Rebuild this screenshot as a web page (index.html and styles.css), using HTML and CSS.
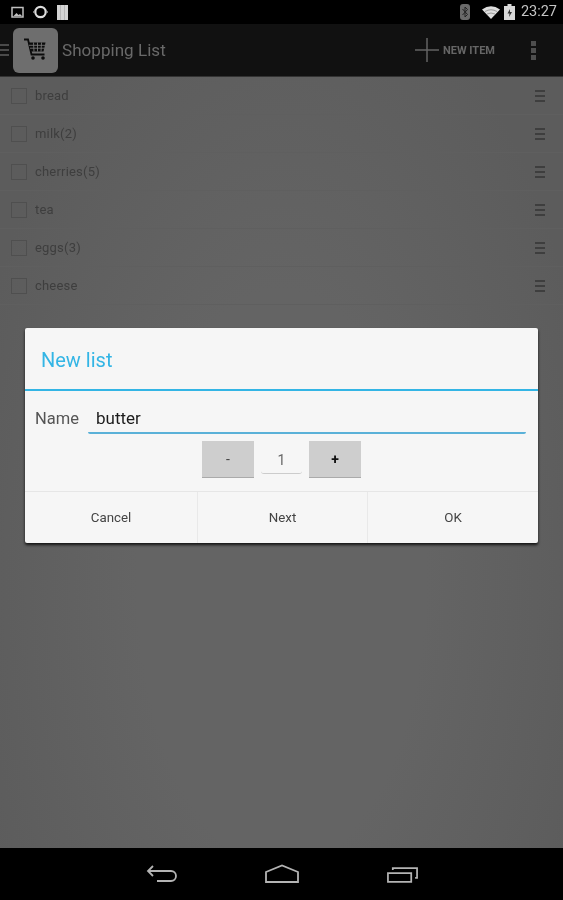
FILE: index.html
```html
<!DOCTYPE html>
<html lang="en">
<head>
<meta charset="utf-8">
<title>Shopping List</title>
<link rel="stylesheet" href="styles.css">
</head>
<body>
<div class="screen">
  <header class="status">
    <div class="status-left">
      <svg class="ico" width="13" height="13" viewBox="0 0 13 13"><path d="M1 1.500h11v9.500H1z" fill="none" stroke="#c0c0c0" stroke-width="1.500"/><path d="M2.500 10l3-3 2 2 1.500-1 2 2z" fill="#c0c0c0"/></svg>
      <svg class="ico" width="15" height="16" viewBox="0 0 15 16"><circle cx="7.500" cy="8" r="5.200" fill="none" stroke="#dcdcdc" stroke-width="2.200"/><path d="M0 8h1.500M13.500 8H15" stroke="#999" stroke-width="1.500"/></svg>
      <svg class="ico" width="11" height="15" viewBox="0 0 11 15"><path d="M0 0h11v15H0z" fill="#d4d4d4"/><path d="M3.500 0v15M7.500 0v15" stroke="#b0b0b0" stroke-width=".8"/></svg>
    </div>
    <div class="status-right">
      <svg class="bt" width="10" height="16" viewBox="0 0 10 16"><rect width="10" height="16" rx="3" fill="#6a6a6a"/><path d="M2.500 5l5 5.500L5 13V3l2.500 2.500-5 5.500" fill="none" stroke="#222" stroke-width="1"/></svg>
      <svg class="wifi" width="18" height="13" viewBox="0 0 18 13"><path d="M0 3.500Q9-3 18 3.500L9 13z" fill="#dedede"/><path d="M3 5.500Q9 2 15 5.500M5 8Q9 6 13 8" stroke="#888" stroke-width=".8" fill="none"/></svg>
      <svg class="batt" width="11" height="16" viewBox="0 0 11 16"><path d="M3.500 0h4v2h3.500v14H0V2h3.500z" fill="#d8d8d8"/><path d="M6 5L3.500 9.500h2L5 13l3-5H6z" fill="#333"/></svg>
      <span class="clock">23:27</span>
    </div>
  </header>

  <nav class="actionbar">
    <div class="drawer"><i></i><i></i><i></i></div>
    <div class="app-icon">
      <svg width="30" height="30" viewBox="0 0 30 30"><path d="M3 4.500h4l3.500 15h13" fill="none" stroke="#0c0c0c" stroke-width="1.800"/><path d="M7.500 7.500h17l-2 9H9.500z" fill="#0c0c0c"/><path d="M8 10.300h16M9 13.200h14.500M12.500 7.500l.5 9M16.500 7.500v9M20.500 7.500l-.5 9" stroke="#777" stroke-width=".9"/><circle cx="12" cy="23" r="1.800" fill="#0c0c0c"/><circle cx="22" cy="23" r="1.800" fill="#0c0c0c"/></svg>
    </div>
    <span class="app-title">Shopping List</span>
    <div class="new-item">
      <svg width="24" height="24" viewBox="0 0 24 24"><path d="M12 0v24M0 12h24" stroke="#636363" stroke-width="1.500"/></svg>
      <span>NEW ITEM</span>
    </div>
    <div class="overflow"><i></i><i></i><i></i></div>
  </nav>

  <main class="content">
    <ul class="list">
      <li class="row"><span class="check"></span><span class="label">bread</span><span class="grip"><i></i><i></i><i></i></span></li>
      <li class="row"><span class="check"></span><span class="label">milk(2)</span><span class="grip"><i></i><i></i><i></i></span></li>
      <li class="row"><span class="check"></span><span class="label">cherries(5)</span><span class="grip"><i></i><i></i><i></i></span></li>
      <li class="row"><span class="check"></span><span class="label">tea</span><span class="grip"><i></i><i></i><i></i></span></li>
      <li class="row"><span class="check"></span><span class="label">eggs(3)</span><span class="grip"><i></i><i></i><i></i></span></li>
      <li class="row"><span class="check"></span><span class="label">cheese</span><span class="grip"><i></i><i></i><i></i></span></li>
    </ul>

    <section class="dialog">
      <h2 class="dialog-title">New list</h2>
      <div class="dialog-body">
        <div class="name-row">
          <span class="name-label">Name</span>
          <span class="name-field">butter</span>
        </div>
        <div class="stepper">
          <span class="step minus">-</span>
          <span class="qty">1</span>
          <span class="step plus">+</span>
        </div>
      </div>
      <div class="dialog-actions">
        <span class="action">Cancel</span>
        <span class="action">Next</span>
        <span class="action">OK</span>
      </div>
    </section>
  </main>

  <footer class="navbar">
    <svg width="32" height="20" viewBox="0 0 32 20"><path d="M7 2L2 7l5 5M2 7h23a4.500 4.500 0 0 1 0 10H11" fill="none" stroke="#b4b4b4" stroke-width="1.800"/></svg>
    <svg width="36" height="20" viewBox="0 0 36 20"><path d="M2 8L18 1.500 34 8v10H2z" fill="none" stroke="#b4b4b4" stroke-width="1.800"/></svg>
    <svg width="33" height="20" viewBox="0 0 34 20"><path d="M2 9h24v9H2z" fill="none" stroke="#b4b4b4" stroke-width="1.800"/><path d="M7 6V4h25v10h-2" fill="none" stroke="#b4b4b4" stroke-width="1.800"/></svg>
  </footer>
</div>
</body>
</html>
```
FILE: styles.css
```css
* { box-sizing: border-box; }
html, body { margin: 0; padding: 0; background: #000; }
body { font-family: Roboto, "Noto Sans", sans-serif; }
.screen {
  width: 563px;
  height: 900px;
  display: flex;
  flex-direction: column;
  overflow: hidden;
  filter: blur(0.5px);
}

.status {
  height: 24px;
  flex: none;
  background: #000;
  display: flex;
  align-items: center;
  justify-content: space-between;
  padding: 0 6px 0 11px;
}
.status-left { display: flex; align-items: center; gap: 9px; }
.status-right { display: flex; align-items: center; }
.bt { margin-right: 12px; }
.wifi { margin-right: 4px; }
.batt { margin-right: 6px; }
.clock { color: #c4c4c4; font-size: 14.500px; line-height: 24px; }
.ico { display: block; }

.actionbar {
  height: 53px;
  flex: none;
  background: #111;
  border-bottom: 1px solid #333;
  display: flex;
  align-items: center;
  position: relative;
}
.drawer { width: 13px; display: flex; flex-direction: column; gap: 3px; }
.drawer i { display: block; height: 2px; width: 9px; background: #4a4a4a; }
.app-icon {
  width: 45px;
  height: 45px;
  border-radius: 6px;
  background: #6e6e6e;
  display: flex;
  align-items: center;
  justify-content: center;
}
.app-title { margin-left: 4px; font-size: 17px; letter-spacing: .05px; color: #696969; }
.new-item {
  margin-left: auto;
  display: flex;
  align-items: center;
  gap: 4px;
  color: #666;
  font-size: 11px;
  font-weight: 700;
}
.overflow { width: 68px; padding-left: 8px; display: flex; flex-direction: column; align-items: center; gap: 2px; }
.overflow i { display: block; width: 5px; height: 5px; background: #4e4e4e; }

.content {
  flex: 1;
  position: relative;
  background: radial-gradient(ellipse 320px 640px at 50% 65%, #646464 45%, #5c5c5c 100%);
}
.list { list-style: none; margin: 0; padding: 0; }
.row {
  height: 38px;
  display: flex;
  align-items: center;
  padding: 0 18px 0 11px;
  border-bottom: 1px solid #5f5f5f;
}
.check { width: 16px; height: 16px; border: 1px solid #4f4f4f; flex: none; }
.label { margin-left: 8px; font-size: 13px; letter-spacing: .2px; color: #3e3e3e; }
.grip { margin-left: auto; display: flex; flex-direction: column; gap: 3px; }
.grip i { display: block; width: 10px; height: 2px; background: #3e3e3e; }

.dialog {
  position: absolute;
  left: 25px;
  top: 251px;
  width: 513px;
  height: 215px;
  background: #f6f6f6;
  border-radius: 2px;
  box-shadow: 0 2px 3px rgba(0,0,0,.8);
  display: flex;
  flex-direction: column;
}
.dialog-title {
  margin: 0;
  height: 63px;
  flex: none;
  padding: 2px 16px 0;
  display: flex;
  align-items: center;
  font-size: 20px;
  font-weight: 400;
  color: #33b5e5;
  border-bottom: 2px solid #33b5e5;
}
.dialog-body { flex: 1; display: flex; flex-direction: column; }
.name-row { display: flex; align-items: flex-start; padding: 16px 12px 0 10px; height: 50px; }
.name-label { font-size: 16.500px; line-height: 24px; color: #555; width: 53px; flex: none; }
.name-field {
  flex: 1;
  height: 27px;
  padding-left: 8px;
  font-size: 17px;
  line-height: 23px;
  color: #1c1c1c;
  border-bottom: 2px solid #5ab1d8;
  border-radius: 0 0 2px 2px;
}
.stepper { display: flex; justify-content: center; align-items: center; gap: 7px; }
.step {
  width: 52px;
  height: 37px;
  background: #cecece;
  border-bottom: 1px solid #aaa;
  display: flex;
  align-items: center;
  justify-content: center;
  font-size: 14px;
  color: #444;
}
.plus { color: #111; font-weight: 700; }
.qty {
  width: 41px;
  height: 26px;
  margin-top: 2px;
  text-align: center;
  font-size: 14px;
  line-height: 24px;
  color: #666;
  border-bottom: 1px solid #ccc;
  border-radius: 0 0 3px 3px;
}
.dialog-actions {
  height: 52px;
  flex: none;
  display: grid;
  grid-template-columns: 172px 170px 1fr;
  border-top: 1px solid #e6e6e6;
}
.action {
  display: flex;
  align-items: center;
  justify-content: center;
  font-size: 13.300px;
  color: #444;
  border-left: 1px solid #e9e9e9;
}
.action:first-child { border-left: 0; }

.navbar {
  height: 52px;
  flex: none;
  background: #000;
  display: flex;
  align-items: center;
  justify-content: center;
  gap: 86px;
  padding-left: 2px;
}
```
